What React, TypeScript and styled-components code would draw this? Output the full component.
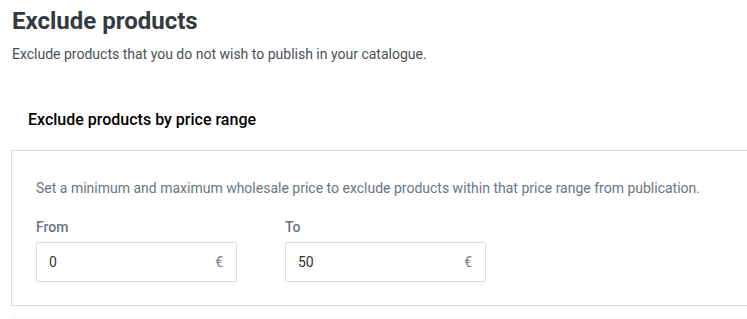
import React from "react";
import styled, { createGlobalStyle } from "styled-components";

const Global = createGlobalStyle`
  html, body { margin: 0; padding: 0; background: #fff; }
  body { font-family: Roboto, "Liberation Sans", Arial, sans-serif; }
  * { box-sizing: border-box; }
`;

const Page = styled.div`
  padding: 6px 0 0 11px;
  width: 747px;
  height: 319px;
  overflow: hidden;
`;

const Title = styled.h1`
  margin: 0 0 0 1px;
  font-size: 24px;
  line-height: 30px;
  font-weight: 700;
  color: #343a40;
`;

const Lead = styled.p`
  margin: 8px 0 0 1px;
  font-size: 14px;
  line-height: 20px;
  color: #495057;
`;

const SectionTitle = styled.h2`
  margin: 46px 0 0 17px;
  font-size: 16px;
  line-height: 20px;
  font-weight: 500;
  color: #000;
`;

const Panel = styled.div`
  margin-top: 20px;
  border: 1px solid #dcdcdc;
  padding: 24px 24px 23px;
  width: 780px;
`;

const Help = styled.p`
  margin: 3px 0 0;
  font-size: 14px;
  line-height: 20px;
  color: #6c757d;
`;

const Fields = styled.div`
  display: flex;
  gap: 48px;
  margin-top: 20px;
`;

const Field = styled.div`
  display: flex;
  flex-direction: column;
  width: 201px;
`;

const Label = styled.label`
  font-size: 14px;
  line-height: 18px;
  font-weight: 500;
  color: #6c757d;
  margin-bottom: 6px;
`;

const InputBox = styled.div`
  display: flex;
  align-items: center;
  height: 40px;
  border: 1px solid #dcdcdc;
  border-radius: 2px;
  padding: 0 13px 0 12px;
`;

const Value = styled.span`
  flex: 1;
  font-size: 14px;
  color: #333;
`;

const Unit = styled.span`
  font-size: 14px;
  color: #7a8088;
`;

const Footer = styled.div`
  height: 12px;
  margin-top: 9px;
  background: #fbfbfb;
`;

const PriceField = ({ label, value }: { label: string; value: string }) => (
  <Field>
    <Label>{label}</Label>
    <InputBox>
      <Value>{value}</Value>
      <Unit>€</Unit>
    </InputBox>
  </Field>
);

export default function App() {
  return (
    <>
      <Global />
      <Page>
        <Title>Exclude products</Title>
        <Lead>Exclude products that you do not wish to publish in your catalogue.</Lead>
        <SectionTitle>Exclude products by price range</SectionTitle>
        <Panel>
          <Help>
            Set a minimum and maximum wholesale price to exclude products within that price range from publication.
          </Help>
          <Fields>
            <PriceField label="From" value="0" />
            <PriceField label="To" value="50" />
          </Fields>
        </Panel>
        <Footer />
      </Page>
    </>
  );
}
